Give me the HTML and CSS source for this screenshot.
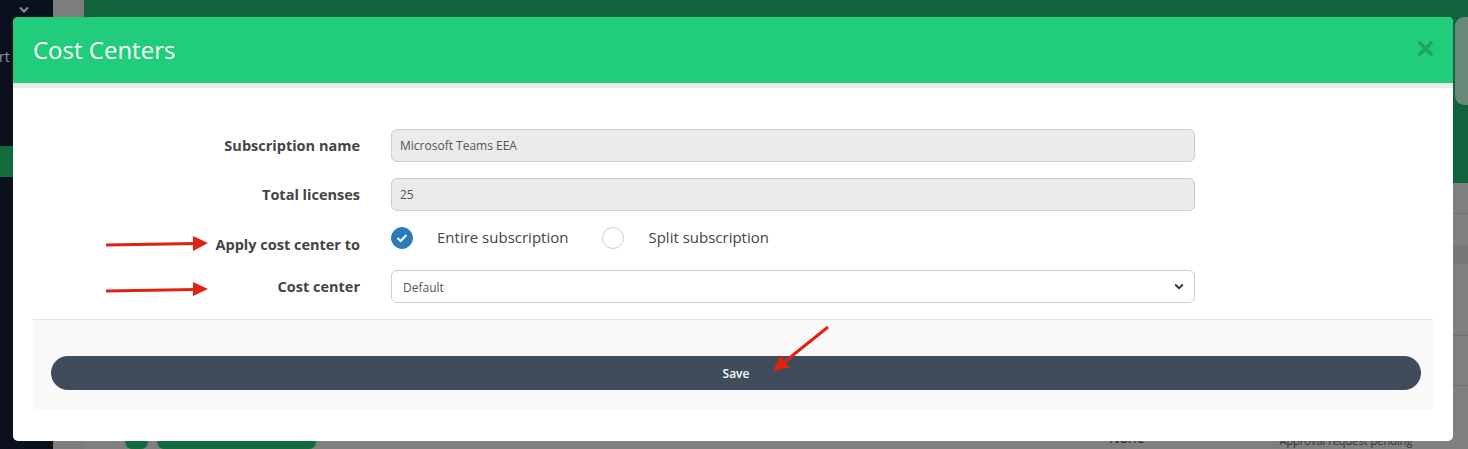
FILE: index.html
```html
<!DOCTYPE html>
<html lang="en">
<head>
<meta charset="utf-8">
<title>Cost Centers</title>
<link rel="stylesheet" href="styles.css">
</head>
<body>
<div class="page">
  <aside class="sidebar">
    <div class="side-chevron">
      <svg width="10" height="7" viewBox="0 0 10 7"><path d="M1 1.5 L5 5.5 L9 1.5" fill="none" stroke="#8a8f99" stroke-width="2"/></svg>
    </div>
    <div class="side-text">rt</div>
    <div class="side-active"></div>
  </aside>
  <div class="gutter"></div>
  <main class="main">
    <div class="main-top">
      <div class="hero-card"></div>
    </div>
    <div class="bg-row bg-row-a"></div>
    <div class="bg-row bg-row-b"></div>
    <div class="bg-row bg-row-band"></div>
    <div class="bg-row bg-row-c"></div>
    <div class="bg-row bg-row-d"></div>
    <div class="bg-last">
      <span class="pill pill-dot"></span>
      <span class="pill pill-wide"></span>
      <span class="bg-none">None</span>
      <span class="bg-status">Approval request pending</span>
    </div>
  </main>
</div>

<div class="modal">
  <div class="modal-header">
    <h1 class="modal-title">Cost Centers</h1>
    <button class="modal-close" aria-label="Close">
      <svg width="15" height="15" viewBox="0 0 15 15"><path d="M2 2 L13 13 M13 2 L2 13" stroke="#19a75f" stroke-width="3.6" stroke-linecap="square"/></svg>
    </button>
  </div>
  <div class="modal-body">
    <div class="form-row">
      <label class="form-label">Subscription name</label>
      <div class="form-input readonly">Microsoft Teams EEA</div>
    </div>
    <div class="form-row">
      <label class="form-label">Total licenses</label>
      <div class="form-input readonly">25</div>
    </div>
    <div class="form-row form-row-radio">
      <label class="form-label label-low">Apply cost center to</label>
      <div class="radio-group">
        <span class="radio checked">
          <svg width="12" height="10" viewBox="0 0 12 10"><path d="M1.5 5 L4.6 8 L10.5 2" fill="none" stroke="#fff" stroke-width="2"/></svg>
        </span>
        <span class="radio-text">Entire subscription</span>
        <span class="radio"></span>
        <span class="radio-text">Split subscription</span>
      </div>
    </div>
    <div class="form-row">
      <label class="form-label">Cost center</label>
      <div class="form-select">
        <span>Default</span>
        <svg width="10" height="7" viewBox="0 0 10 7"><path d="M1.2 1.5 L5 5.2 L8.8 1.5" fill="none" stroke="#333" stroke-width="1.8"/></svg>
      </div>
    </div>
  </div>
  <div class="modal-footer">
    <button class="btn-save">Save</button>
  </div>
</div>

<svg class="annotations" width="1468" height="449" viewBox="0 0 1468 449">
  <g fill="#e02312" stroke="#e02312">
    <path d="M106 245 L196 243.5" stroke-width="3" fill="none"/>
    <polygon points="208,243 193,236 193,251" stroke="none"/>
    <path d="M106 291 L196 289.5" stroke-width="3" fill="none"/>
    <polygon points="208,289 193,282 193,296" stroke="none"/>
    <path d="M828 327 L785 361.5" stroke-width="3" fill="none"/>
    <polygon points="773,371 789.6,367.5 780,355.6" stroke="none"/>
  </g>
</svg>
</body>
</html>
```

FILE: styles.css
```css
* {
  box-sizing: border-box;
  margin: 0;
  padding: 0;
}

html,
body {
  width: 1468px;
  height: 449px;
  overflow: hidden;
}

body {
  font-family: "Open Sans", "Liberation Sans", sans-serif;
  background: #808080;
  position: relative;
  color: #444;
}

/* ---------- dimmed page behind the modal ---------- */
.page {
  display: flex;
  height: 449px;
}

.sidebar {
  width: 53px;
  flex: none;
  background: #0a101c;
  display: flex;
  flex-direction: column;
  overflow: hidden;
}

.side-chevron {
  height: 19px;
  display: flex;
  align-items: center;
  padding-left: 19px;
}

.side-text {
  margin-top: 30px;
  font-size: 14px;
  line-height: 16px;
  color: #9399a3;
  margin-left: -1px;
}

.side-active {
  margin-top: 81px;
  width: 13px;
  height: 31px;
  background: #116b3c;
}

.gutter {
  width: 31px;
  flex: none;
  background: #7d7d7d;
}

.main {
  flex: 1;
  display: flex;
  flex-direction: column;
  background: #808080;
}

.main-top {
  height: 188px;
  background: #10633a;
  display: flex;
  justify-content: flex-end;
  padding-top: 17px;
  align-items: flex-start;
}

.hero-card {
  width: 13px;
  height: 88px;
  background: #6a8878;
  border-radius: 9px 0 0 9px;
}

.bg-row {
  border-bottom: 1px solid #6f6f6f;
}

.bg-row-a {
  height: 32px;
}

.bg-row-b {
  height: 33px;
  border-bottom: none;
}

.bg-row-band {
  height: 19px;
  background: #777;
  border-bottom: none;
}

.bg-row-c {
  height: 74px;
}

.bg-row-d {
  height: 52px;
}

.bg-last {
  flex: 1;
  display: flex;
  align-items: flex-start;
  padding-top: 44px;
}

.pill {
  display: block;
  height: 14px;
  background: #116b3c;
  border-radius: 7px;
  margin-top: 5px;
}

.pill-dot {
  width: 23px;
  margin-left: 41px;
}

.pill-wide {
  width: 159px;
  margin-left: 9px;
}

.bg-none {
  margin-left: 793px;
  font-size: 14px;
  line-height: 16px;
  color: #222;
}

.bg-status {
  margin-left: 135px;
  margin-top: 4px;
  font-size: 11px;
  line-height: 14px;
  color: #333;
}

/* ---------- modal ---------- */
.modal {
  position: absolute;
  left: 13px;
  top: 17px;
  width: 1440px;
  height: 424px;
  background: #fff;
  border-radius: 5px;
  overflow: hidden;
  display: flex;
  flex-direction: column;
}

.modal-header {
  flex: none;
  height: 71px;
  background: #21cd7a;
  display: flex;
  align-items: center;
  justify-content: space-between;
  padding: 0 20px;
  border-bottom: 5px solid #ececec;
}

.modal-title {
  font-size: 24px;
  font-weight: 400;
  color: #fff;
  line-height: 32px;
  margin-top: -1px;
}

.modal-close {
  border: none;
  background: none;
  width: 15px;
  height: 15px;
  display: flex;
  margin-top: -4px;
}

.modal-body {
  padding: 41px 20px 16px;
  display: flex;
  flex-direction: column;
  gap: 16px;
}

.form-row {
  display: grid;
  grid-template-columns: 327px 804px;
  column-gap: 31px;
  align-items: center;
}

.form-row-radio {
  align-items: start;
  height: 27px;
}

.form-label {
  text-align: right;
  font-size: 14.5px;
  font-weight: 700;
  color: #444;
  line-height: 20px;
  margin-top: 1px;
}

.label-low {
  padding-top: 7px;
}

.form-input {
  height: 33px;
  border: 1px solid #cdcdcd;
  border-radius: 6px;
  padding: 0 8px;
  display: flex;
  align-items: center;
  font-size: 12px;
  color: #555;
}

.form-input.readonly {
  background: #ebebeb;
}

.radio-group {
  display: flex;
  align-items: center;
  height: 22px;
}

.radio {
  width: 22px;
  height: 22px;
  border-radius: 50%;
  border: 1px solid #cfcfcf;
  background: #fff;
  display: flex;
  align-items: center;
  justify-content: center;
  flex: none;
}

.radio.checked {
  background: #2a79b9;
  border-color: #2a79b9;
}

.radio-text {
  margin-left: 24px;
  margin-right: 34px;
  font-size: 15px;
  color: #444;
  line-height: 20px;
  margin-top: -2px;
}

.form-select {
  height: 33px;
  border: 1px solid #cdcdcd;
  border-radius: 6px;
  padding: 0 10px 0 11px;
  display: flex;
  align-items: center;
  justify-content: space-between;
  font-size: 12px;
  color: #555;
  background: #fff;
}

.form-select span {
  margin-top: 1px;
}

.modal-footer {
  margin: 0 20px;
  border-top: 1px solid #e5e5e5;
  background: #f9f9f9;
  border-radius: 0 0 4px 4px;
  padding: 36px 12px 20px 18px;
}

.btn-save {
  display: block;
  width: 100%;
  height: 34px;
  border: none;
  border-radius: 17px;
  background: #3f4c5c;
  color: #fff;
  font-family: "Open Sans", "Liberation Sans", sans-serif;
  font-size: 12px;
  font-weight: 600;
}

/* ---------- annotation arrows ---------- */
.annotations {
  position: absolute;
  left: 0;
  top: 0;
  pointer-events: none;
}
```
